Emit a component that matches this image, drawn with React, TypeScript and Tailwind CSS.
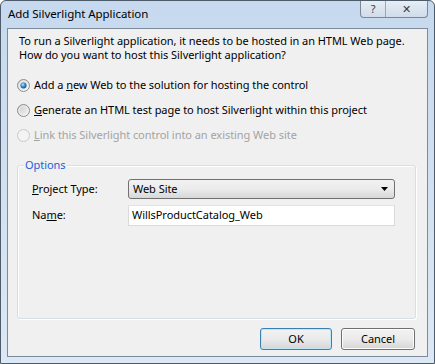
import React from "react";

function Radio({ checked, disabled }: { checked?: boolean; disabled?: boolean }) {
  return (
    <svg width="13" height="13" viewBox="0 0 13 13" className="shrink-0">
      <defs>
        <linearGradient id="rfill" x1="0" y1="0" x2="1" y2="1">
          <stop offset="0" stopColor="#cbcbcb" />
          <stop offset="1" stopColor="#f6f6f6" />
        </linearGradient>
        <radialGradient id="rdot" cx="0.4" cy="0.35" r="0.7">
          <stop offset="0" stopColor="#c4e6fb" />
          <stop offset="0.5" stopColor="#2f8ad0" />
          <stop offset="1" stopColor="#134f8a" />
        </radialGradient>
      </defs>
      <circle cx="6.5" cy="6.5" r="6" fill={disabled ? "#f4f4f4" : "url(#rfill)"} stroke={disabled ? "#c8c8c8" : "#8e8f8f"} strokeWidth="1" />
      <circle cx="6.5" cy="6.5" r="4.5" fill="none" stroke={disabled ? "#f0f0f0" : "#f4f4f4"} strokeWidth="0.8" />
      {checked && <circle cx="6.5" cy="6.5" r="3" fill="url(#rdot)" />}
    </svg>
  );
}

export default function App() {
  return (
    <div
      className="w-[435px] h-[364px] flex flex-col border border-[#4d5b6b] rounded-t-[6px] bg-gradient-to-b from-[#c6d9ee] to-[#dce8f4] text-[11px] tracking-[-0.05px] text-black whitespace-nowrap"
      style={{ fontFamily: '"Noto Sans", "Open Sans", sans-serif' }}
    >
      {/* title bar */}
      <div className="h-[27px] flex items-start shrink-0">
        <div className="pl-[7px] pt-[5px] text-[11.5px] leading-[15px] text-black">Add Silverlight Application</div>
        <div className="ml-auto mr-[6px] flex h-[17px] border border-t-0 border-[#7a8797] rounded-b-[4px] bg-gradient-to-b from-[#e6eef6] to-[#d0dcea]">
          <div className="w-[25px] flex items-center justify-center border-r border-[#9aa7b5] text-[11px] text-[#3b3b3b]">?</div>
          <div className="w-[41px] flex items-center justify-center text-[11px] text-[#3b3b3b]">✕</div>
        </div>
      </div>

      {/* client area */}
      <div className="flex-1 mx-[6px] mb-[6px] border border-[#7d8a99] bg-[#f0f0f0] flex flex-col">
        <div className="pl-[11px] pt-[5px] leading-[14px]">
          <div>To run a Silverlight application, it needs to be hosted in an HTML Web page.</div>
          <div>How do you want to host this Silverlight application?</div>
        </div>

        <div className="pl-[9px] mt-[15px] flex flex-col gap-[9px]">
          <div className="flex items-center gap-[4px] h-[16px]">
            <Radio checked />
            <span>Add a <u>n</u>ew Web to the solution for hosting the control</span>
          </div>
          <div className="flex items-center gap-[4px] h-[16px]">
            <Radio />
            <span><u>G</u>enerate an HTML test page to host Silverlight within this project</span>
          </div>
          <div className="flex items-center gap-[4px] h-[16px] text-[#a3a3a3]">
            <Radio disabled />
            <span><u>L</u>ink this Silverlight control into an existing Web site</span>
          </div>
        </div>

        {/* options group */}
        <div className="relative ml-[9px] mr-[11px] mt-[22px] h-[154px] border border-[#d5dfe5] rounded-[3px] shadow-[inset_1px_1px_0_#ffffff,1px_1px_0_#ffffff]">
          <div className="absolute left-[6px] top-[-9px] px-[1px] bg-[#f0f0f0] text-[#1d5fd8] leading-[15px]">Options</div>
          <div className="pt-[13px] pl-[14px] pr-[20px] flex flex-col gap-[6px]">
            <div className="flex items-center">
              <span className="w-[96px]"><u>P</u>roject Type:</span>
              <div className="flex-1 h-[20px] border border-[#707070] rounded-[3px] bg-gradient-to-b from-[#f2f2f2] via-[#ebebeb] to-[#d8d8d8] flex items-center pl-[4px] pr-[6px]">
                <span>Web Site</span>
                <svg width="7" height="4" viewBox="0 0 7 4" className="ml-auto">
                  <path d="M0 0H7L3.5 4Z" fill="#000" />
                </svg>
              </div>
            </div>
            <div className="flex items-center">
              <span className="w-[96px]">Na<u>m</u>e:</span>
              <div className="flex-1 h-[21px] border border-[#dadada] border-t-[#e2e3ea] bg-white flex items-center pl-[3px]">
                WillsProductCatalog_Web
              </div>
            </div>
          </div>
        </div>

        <div className="mt-auto mb-[6px] mr-[12px] flex justify-end gap-[9px]">
          <div className="w-[72px] h-[22px] border border-[#3c7fb1] rounded-[3px] bg-gradient-to-b from-[#f2f2f2] via-[#ebebeb] to-[#d6d6d6] shadow-[inset_0_0_0_1px_#bfe6f9] flex items-center justify-center">OK</div>
          <div className="w-[74px] h-[22px] border border-[#707070] rounded-[3px] bg-gradient-to-b from-[#f2f2f2] via-[#ebebeb] to-[#d6d6d6] shadow-[inset_0_0_0_1px_#fcfcfc] flex items-center justify-center">Cancel</div>
        </div>
      </div>
    </div>
  );
}
